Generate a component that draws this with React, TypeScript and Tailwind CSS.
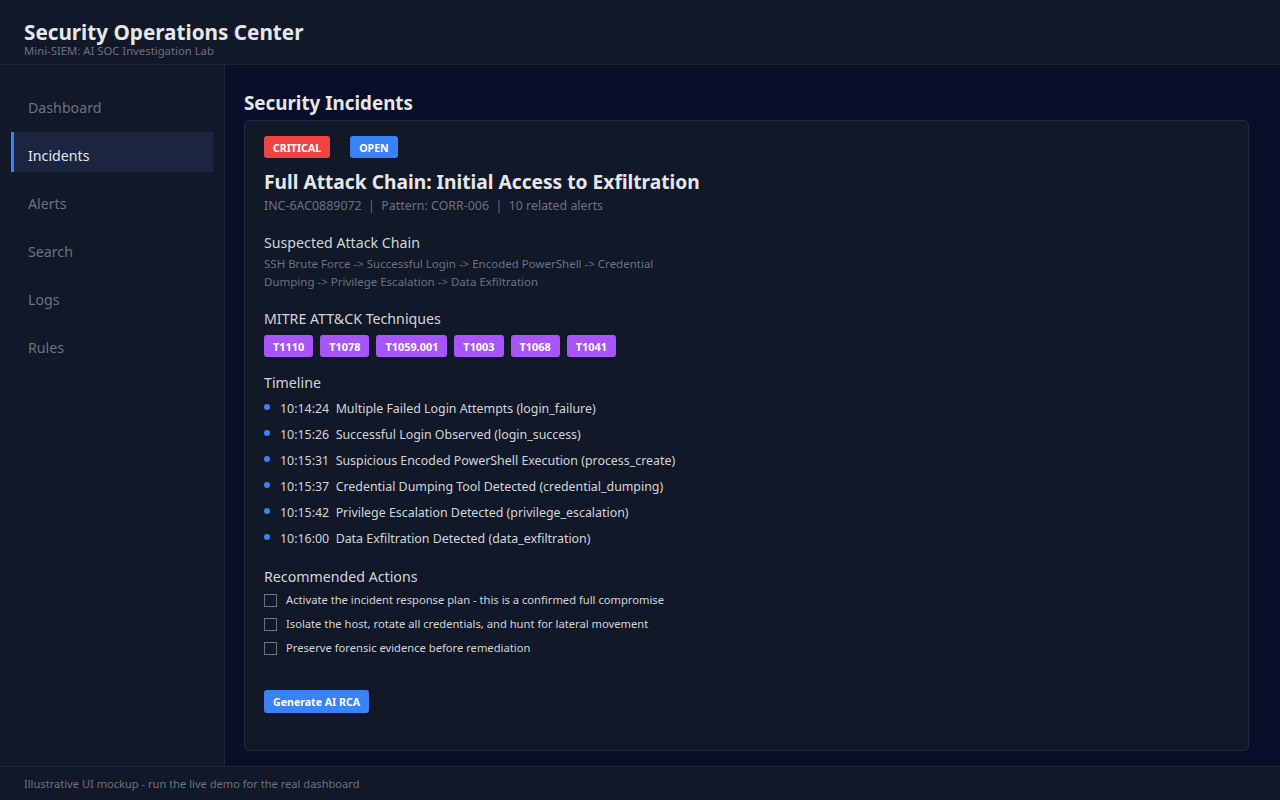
import React from "react";

const navItems = ["Dashboard", "Incidents", "Alerts", "Search", "Logs", "Rules"];

const techniques = ["T1110", "T1078", "T1059.001", "T1003", "T1068", "T1041"];

const timeline = [
  { time: "10:14:24", text: "Multiple Failed Login Attempts (login_failure)" },
  { time: "10:15:26", text: "Successful Login Observed (login_success)" },
  { time: "10:15:31", text: "Suspicious Encoded PowerShell Execution (process_create)" },
  { time: "10:15:37", text: "Credential Dumping Tool Detected (credential_dumping)" },
  { time: "10:15:42", text: "Privilege Escalation Detected (privilege_escalation)" },
  { time: "10:16:00", text: "Data Exfiltration Detected (data_exfiltration)" },
];

const actions = [
  "Activate the incident response plan - this is a confirmed full compromise",
  "Isolate the host, rotate all credentials, and hunt for lateral movement",
  "Preserve forensic evidence before remediation",
];

export default function App() {
  return (
    <div
      className="flex h-[800px] w-[1280px] flex-col overflow-hidden bg-[#0a0f29] text-[#e5e7eb]"
      style={{ fontFamily: '"Noto Sans", "Open Sans", sans-serif' }}
    >
      {/* Header */}
      <header className="h-[65px] shrink-0 border-b border-[#1c2333] bg-[#111827] px-6 pt-[18px]">
        <h1 className="text-[20.7px] font-bold leading-[28px] text-[#e5e7eb]">Security Operations Center</h1>
        <p className="-mt-[2px] text-[11.3px] leading-[14px] text-[#6b7280]">Mini-SIEM: AI SOC Investigation Lab</p>
      </header>

      <div className="flex min-h-0 flex-1">
        {/* Sidebar */}
        <aside className="w-[225px] shrink-0 border-r border-[#1c2333] bg-[#111827] px-[11px] pt-[19px]">
          <nav className="flex flex-col gap-2">
            {navItems.map((item) => (
              <div
                key={item}
                className={
                  item === "Incidents"
                    ? "flex h-10 items-center border-l-[3px] border-[#3b82f6] bg-[#1a2540] pl-[14px] pt-[8px] text-[14.2px] text-[#e5e7eb]"
                    : "flex h-10 items-center border-l-[3px] border-transparent pl-[14px] pt-[8px] text-[14.2px] text-[#6b7280]"
                }
              >
                {item}
              </div>
            ))}
          </nav>
        </aside>

        {/* Main */}
        <main className="min-w-0 flex-1 pl-[19px] pt-[25px]">
          <h2 className="text-[18.8px] font-bold leading-[26px] text-[#e5e7eb]">Security Incidents</h2>
          <section className="mt-[4px] h-[631px] w-[1005px] rounded-[5px] border border-[#1f2937] bg-[#111827] px-[19px] pt-[15px]">
            <div className="flex gap-5">
              <span className="flex h-[22px] items-center rounded-[3px] bg-[#ef4444] px-[9px] pt-[3px] text-[10.6px] font-bold text-white">
                CRITICAL
              </span>
              <span className="flex h-[22px] items-center rounded-[3px] bg-[#3b82f6] px-[9px] pt-[3px] text-[10.6px] font-bold text-white">
                OPEN
              </span>
            </div>

            <h3 className="mt-[9px] text-[19.2px] font-bold leading-[30px] text-[#e5e7eb]">
              Full Attack Chain: Initial Access to Exfiltration
            </h3>
            <p className="text-[12.4px] leading-[18px] text-[#6b7280]">
              INC-6AC0889072&nbsp;&nbsp;|&nbsp;&nbsp;Pattern: CORR-006&nbsp;&nbsp;|&nbsp;&nbsp;10 related alerts
            </p>

            <h4 className="mt-[17px] text-[14.2px] leading-[22px] text-[#d1d5db]">Suspected Attack Chain</h4>
            <p className="mt-[1px] w-[420px] text-[11.5px] leading-[18px] text-[#6b7280]">
              SSH Brute Force -&gt; Successful Login -&gt; Encoded PowerShell -&gt; Credential Dumping -&gt; Privilege
              Escalation -&gt; Data Exfiltration
            </p>

            <h4 className="mt-[17px] text-[14.2px] leading-[22px] text-[#d1d5db]">MITRE ATT&amp;CK Techniques</h4>
            <div className="mt-[5px] flex gap-[7px]">
              {techniques.map((t) => (
                <span
                  key={t}
                  className="flex h-[22px] items-center rounded-[3px] bg-[#a855f7] px-[9px] pt-[2px] text-[10.9px] font-bold text-white"
                >
                  {t}
                </span>
              ))}
            </div>

            <h4 className="mt-[15px] text-[14.2px] leading-[22px] text-[#d1d5db]">Timeline</h4>
            <ul className="mt-[2px] flex flex-col">
              {timeline.map((e) => (
                <li key={e.time} className="flex h-[26px] items-center text-[12.4px] text-[#d1d5db]">
                  <span className="mb-[5px] mr-[10px] h-[6px] w-[6px] rounded-full bg-[#3b82f6]" />
                  <span className="whitespace-pre">{e.time}  {e.text}</span>
                </li>
              ))}
            </ul>

            <h4 className="mt-[14px] text-[14.2px] leading-[22px] text-[#d1d5db]">Recommended Actions</h4>
            <ul className="flex flex-col">
              {actions.map((a) => (
                <li key={a} className="flex h-6 items-center text-[11.2px] text-[#d1d5db]">
                  <span className="mr-[9px] h-[13px] w-[13px] border border-[#6b7280]" />
                  {a}
                </li>
              ))}
            </ul>

            <button className="mt-[30px] flex h-[23px] items-center rounded-[3px] bg-[#3b82f6] px-[9px] pt-[2px] text-[10.6px] font-bold text-white">
              Generate AI RCA
            </button>
          </section>
        </main>
      </div>

      {/* Footer */}
      <footer className="h-[34px] shrink-0 border-t border-[#1c2333] bg-[#111827] px-6 pt-[9px] text-[11.1px] text-[#6b7280]">
        Illustrative UI mockup - run the live demo for the real dashboard
      </footer>
    </div>
  );
}
